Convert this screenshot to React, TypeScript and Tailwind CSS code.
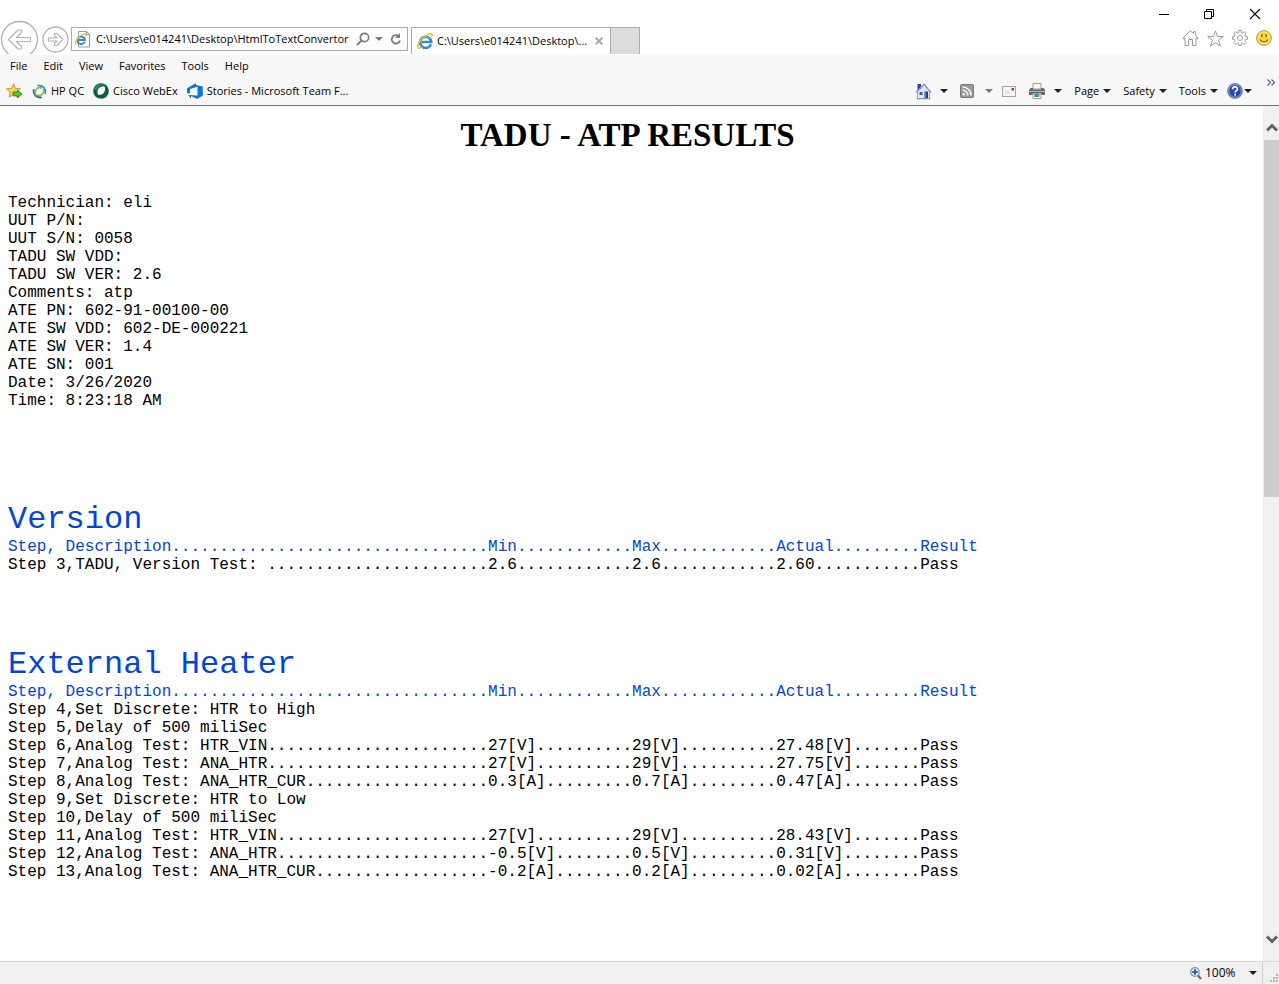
import type { ReactNode } from "react";

type Row = { step: string; min?: string; max?: string; actual?: string; result?: string };

const details = [
  "Technician: eli",
  "UUT P/N:",
  "UUT S/N: 0058",
  "TADU SW VDD:",
  "TADU SW VER: 2.6",
  "Comments: atp",
  "ATE PN: 602-91-00100-00",
  "ATE SW VDD: 602-DE-000221",
  "ATE SW VER: 1.4",
  "ATE SN: 001",
  "Date: 3/26/2020",
  "Time: 8:23:18 AM",
];

const headings: Row = { step: "Step, Description", min: "Min", max: "Max", actual: "Actual", result: "Result" };

const sections: { title: string; rows: Row[] }[] = [
  {
    title: "Version",
    rows: [{ step: "Step 3,TADU, Version Test: ", min: "2.6", max: "2.6", actual: "2.60", result: "Pass" }],
  },
  {
    title: "External Heater",
    rows: [
      { step: "Step 4,Set Discrete: HTR to High" },
      { step: "Step 5,Delay of 500 miliSec" },
      { step: "Step 6,Analog Test: HTR_VIN", min: "27[V]", max: "29[V]", actual: "27.48[V]", result: "Pass" },
      { step: "Step 7,Analog Test: ANA_HTR", min: "27[V]", max: "29[V]", actual: "27.75[V]", result: "Pass" },
      { step: "Step 8,Analog Test: ANA_HTR_CUR", min: "0.3[A]", max: "0.7[A]", actual: "0.47[A]", result: "Pass" },
      { step: "Step 9,Set Discrete: HTR to Low" },
      { step: "Step 10,Delay of 500 miliSec" },
      { step: "Step 11,Analog Test: HTR_VIN", min: "27[V]", max: "29[V]", actual: "28.43[V]", result: "Pass" },
      { step: "Step 12,Analog Test: ANA_HTR", min: "-0.5[V]", max: "0.5[V]", actual: "0.31[V]", result: "Pass" },
      { step: "Step 13,Analog Test: ANA_HTR_CUR", min: "-0.2[A]", max: "0.2[A]", actual: "0.02[A]", result: "Pass" },
    ],
  },
];

// Columns are dot-padded: description takes 50 characters, each value 15.
function formatRow(r: Row): string {
  if (!r.result) return r.step;
  return (
    r.step.padEnd(50, ".") +
    (r.min ?? "").padEnd(15, ".") +
    (r.max ?? "").padEnd(15, ".") +
    (r.actual ?? "").padEnd(15, ".") +
    r.result
  );
}

function Caret({ className = "text-[#1e1e1e]" }: { className?: string }) {
  return (
    <svg width="8" height="4" viewBox="0 0 8 4" className={`shrink-0 ${className}`} aria-hidden="true">
      <path d="M0 0h8L4 4z" fill="currentColor" />
    </svg>
  );
}

function IeLogo({ size }: { size: number }) {
  return (
    <svg width={size} height={size} viewBox="0 0 16 16" fill="none" aria-hidden="true" className="shrink-0">
      <path d="M14 11.300A5.600 5.600 0 1 1 14.300 9H4.800" stroke="#2b8fd0" strokeWidth="2.600" />
      <path d="M4 7.500A4.800 4.800 0 0 1 13 6.200" stroke="#6cc4ef" strokeWidth="1" />
      <path d="M1.200 15C-.6 12 4.500 4.600 10.500 1.600 14-.2 16 1 14.800 4" stroke="#f3b71b" strokeWidth="1.500" />
      <path d="M1.200 15c1 .6 2.500 0 4-1" stroke="#f3b71b" strokeWidth="1.300" />
    </svg>
  );
}

function PageIcon() {
  return (
    <svg width="16" height="17" viewBox="0 0 16 17" fill="none" aria-hidden="true" className="shrink-0">
      <path d="M3.500 .5h8l3 3v12.500h-11z" fill="#fff" stroke="#9b9b9b" />
      <path d="M11.500 .5v3h3" stroke="#9b9b9b" />
      <path d="M9.700 10.900A3.800 3.800 0 1 1 10 9H3.500" stroke="#2b8fd0" strokeWidth="2" />
      <path d="M1.200 13.300C-.6 11 3.500 5 7.500 3.500c2.800-1.200 4-.2 3.300 1.900" stroke="#f3b71b" strokeWidth="1.300" />
    </svg>
  );
}

function BackIcon() {
  return (
    <svg width="39" height="39" viewBox="0 0 39 39" fill="none" stroke="#b1b1b1" aria-hidden="true">
      <circle cx="19.500" cy="19.500" r="18" strokeWidth="1.300" />
      <path d="M8.500 19.500l9.500-9.500h3.500v2.500l-5 5H30.500v4H16.500l5 5V29H18z" strokeWidth="1.200" strokeLinejoin="round" />
    </svg>
  );
}

function ForwardIcon() {
  return (
    <svg width="27" height="27" viewBox="0 0 27 27" fill="none" stroke="#b1b1b1" aria-hidden="true">
      <circle cx="13.500" cy="13.500" r="12.500" strokeWidth="1.300" />
      <path d="M21 13.500l-6-6h-2.500v2l2.500 2.500H6.500v3H15l-2.500 2.500v2H15z" strokeWidth="1.100" strokeLinejoin="round" />
    </svg>
  );
}

function AddFavoriteIcon() {
  return (
    <svg width="17" height="16" viewBox="0 0 17 16" aria-hidden="true">
      <path d="M7.500 .8l2 4.700 5 .4-3.800 3.300 1.200 5-4.400-2.700-4.400 2.700 1.200-5L.5 5.900l5-.4z" fill="#fbd561" stroke="#d9921c" />
      <path d="M7 9h4.500V7l4.500 4-4.500 4v-2.200H7z" fill="#4fc544" stroke="#1f8d22" strokeWidth=".9" />
    </svg>
  );
}

function HpQcIcon() {
  return (
    <svg width="15" height="15" viewBox="0 0 15 15" fill="none" strokeLinecap="round" aria-hidden="true">
      <path d="M6.200 1.600C11 1 13.800 4.500 13.300 9.300" stroke="#3f88cd" strokeWidth="1.800" />
      <path d="M9 13.400C4.500 14 1.200 10.500 1.600 6" stroke="#2d5f9f" strokeWidth="1.800" />
      <path d="M9.300 3.900C5 2.800 2.500 6 3.600 10.300" stroke="#86c440" strokeWidth="1.700" />
      <path d="M5.600 11.200c4.200 1.200 6.900-2 5.900-6" stroke="#86c440" strokeWidth="1.700" />
    </svg>
  );
}

function WebexIcon() {
  return (
    <svg width="16" height="16" viewBox="0 0 16 16" aria-hidden="true">
      <circle cx="8" cy="8" r="7.800" fill="#075e3b" />
      <path d="M5 11.800C3 7 6 3 11.500 3.200c1.700 4.500-.8 9.300-6.500 8.600z" fill="#fff" />
      <path d="M1.500 5.500C3.500 1.500 8 .4 11.500 2.200 7 2 4 4 3.200 8z" fill="#3f9158" />
    </svg>
  );
}

function TeamIcon() {
  return (
    <svg width="16" height="16" viewBox="0 0 16 16" aria-hidden="true">
      <path d="M0 5.500L2.500 3.800 9 0v2l6.800 1.400v9.300L10 16 4 13v2.500L1 12l9.500.4V3.800L3 6v4.500l-3-.5z" fill="#0c78d6" />
    </svg>
  );
}

function HomeColorIcon() {
  return (
    <svg width="17" height="17" viewBox="0 0 17 17" aria-hidden="true">
      <path d="M2.500 8.500L9.500 2l5 6v7.500h-12z" fill="#dfe8f6" stroke="#8592b3" strokeWidth=".8" />
      <path d="M2.500 1h3.500v4.500L2.500 8z" fill="#2a3fb5" />
      <path d="M.8 9.500L9 1.300l7 8.200" fill="none" stroke="#8d98c8" strokeWidth="1.300" />
      <path d="M9.500 8.500h3.500v7H9.500z" fill="#1d377e" />
      <path d="M10 9h1.200v6H10z" fill="#3f8cc8" />
      <path d="M4.500 9h3v3h-3z" fill="#31589c" />
      <path d="M1.500 15.800h14" stroke="#8a9a80" />
    </svg>
  );
}

function RssIcon() {
  return (
    <svg width="14" height="14" viewBox="0 0 14 14" fill="none" aria-hidden="true">
      <rect x=".5" y=".5" width="13" height="13" rx="1.500" fill="#9a9a9a" stroke="#777" />
      <circle cx="3.800" cy="10.300" r="1.300" fill="#fff" />
      <path d="M2.700 6.200a5.200 5.200 0 0 1 5.200 5.200M2.700 3a8.400 8.400 0 0 1 8.400 8.400" stroke="#fff" strokeWidth="1.500" />
    </svg>
  );
}

function MailIcon() {
  return (
    <svg width="14" height="11" viewBox="0 0 14 11" fill="none" aria-hidden="true">
      <rect x=".5" y=".5" width="13" height="10" fill="#f5f5f5" stroke="#a3a3a3" />
      <path d="M9.500 2h2.500v2.500H9.500z" fill="#d8232a" />
      <path d="M3 5.500h4M3 7.500h5" stroke="#d8d8d8" />
    </svg>
  );
}

function PrinterIcon() {
  return (
    <svg width="16" height="16" viewBox="0 0 16 16" aria-hidden="true">
      <path d="M4 .5h8v5.500H4z" fill="#f7f7f7" stroke="#999" />
      <path d="M1.500 5H4v1.500h8V5h2.500L16 7v5H0V7z" fill="#6a6a6a" />
      <path d="M0 8.500h16" stroke="#b0b0b0" />
      <path d="M4 10.500h8v5H4z" fill="#fff" stroke="#999" />
      <path d="M5.500 11H8v3H5.500z" fill="#2a7fd0" />
      <path d="M8 11h2.500v3H8z" fill="#3fa79a" />
    </svg>
  );
}

function HelpIcon() {
  return (
    <svg width="16" height="16" viewBox="0 0 16 16" fill="none" aria-hidden="true">
      <circle cx="8" cy="8" r="7.300" fill="#2449ad" stroke="#7c8594" strokeWidth="1.300" />
      <circle cx="8" cy="8" r="6.200" stroke="#a9bbe8" strokeWidth=".7" />
      <path d="M5.600 6.200C5.600 3 10.500 3.200 10.500 5.900c0 1.800-2.300 1.800-2.300 3.700" stroke="#fff" strokeWidth="1.700" />
      <path d="M7.200 10.800H9v1.800H7.200z" fill="#fff" />
    </svg>
  );
}

function SmileyIcon() {
  return (
    <svg width="16" height="16" viewBox="0 0 16 16" fill="none" aria-hidden="true">
      <circle cx="8" cy="8" r="7.500" fill="#fdd94b" stroke="#a99b6c" strokeWidth=".9" />
      <path d="M5.900 4.200v3M10.100 4.200v3" stroke="#8a6a1c" strokeWidth="1.500" />
      <path d="M4 9.500c1.500 3 6.500 3 8 0" stroke="#8a6a1c" strokeWidth="1.200" />
    </svg>
  );
}

function GearIcon() {
  return (
    <svg width="16" height="16" viewBox="0 0 16 16" fill="none" stroke="#9b9b9b" strokeLinejoin="round" aria-hidden="true">
      <path d="M6.700 .5h2.600v2l1.500.6 1.500-1.400 2 2-1.400 1.500.6 1.500h2v2.600h-2l-.6 1.500 1.400 1.500-2 2-1.500-1.400-1.500.6v2H6.700v-2l-1.500-.6-1.500 1.400-2-2 1.400-1.500-.6-1.500h-2V6.700h2l.6-1.500L1.700 3.700l2-2 1.500 1.400 1.500-.6z" />
      <circle cx="8" cy="8" r="2.500" />
    </svg>
  );
}

function IconButton({ label, className = "", children }: { label: string; className?: string; children: ReactNode }) {
  return (
    <button type="button" aria-label={label} className={`flex shrink-0 items-center justify-center ${className}`}>
      {children}
    </button>
  );
}

function TitleArea() {
  return (
    <header className="flex h-[55px] shrink-0 items-start bg-white">
      <div className="flex h-[54px] shrink-0 items-start gap-[3px] overflow-hidden pt-5">
        <IconButton label="Back">
          <BackIcon />
        </IconButton>
        <IconButton label="Forward" className="mt-[6px]">
          <ForwardIcon />
        </IconButton>
      </div>
      <div className="mt-[27px] ml-[2px] flex h-6 w-[337px] shrink-0 items-center border border-[#ababab] pl-[3px]">
        <PageIcon />
        <input
          aria-label="Address"
          defaultValue="C:\Users\e014241\Desktop\HtmlToTextConvertor"
          className="ml-[5px] w-64 min-w-0 bg-transparent outline-none"
        />
        <IconButton label="Search" className="ml-1">
          <svg width="14" height="14" viewBox="0 0 14 14" fill="none" stroke="#7b7b7b" aria-hidden="true">
            <circle cx="8.500" cy="5.500" r="4.200" strokeWidth="1.700" />
            <path d="M5.500 8.500L1 13" strokeWidth="2" />
          </svg>
        </IconButton>
        <IconButton label="Address suggestions" className="ml-[5px]">
          <Caret className="text-[#7b7b7b]" />
        </IconButton>
        <IconButton label="Refresh" className="ml-[7px]">
          <svg width="12" height="13" viewBox="0 0 12 13" fill="none" stroke="#7b7b7b" aria-hidden="true">
            <path d="M8.800 3.200A4.200 4.200 0 1 0 10 7.500" strokeWidth="1.800" />
            <path d="M10 0v5H5z" fill="#7b7b7b" stroke="none" />
          </svg>
        </IconButton>
      </div>
      <div className="mt-[27px] ml-[3px] flex h-[27px] w-[200px] shrink-0 items-center border border-b-0 border-[#ababab] pl-[5px]">
        <IeLogo size={16} />
        <span className="ml-1 w-[154px] whitespace-nowrap">C:\Users\e014241\Desktop\...</span>
        <IconButton label="Close tab" className="ml-1">
          <svg width="8" height="8" viewBox="0 0 8 8" stroke="#a6a6a6" strokeWidth="2" aria-hidden="true">
            <path d="M.7 .7l6.600 6.600M7.300 .7L.7 7.300" />
          </svg>
        </IconButton>
      </div>
      <button
        type="button"
        aria-label="New tab"
        className="mt-[27px] h-[27px] w-[29px] shrink-0 border border-b-0 border-l-0 border-[#ababab] bg-[#dcdcdc]"
      />
      <div className="ml-auto flex shrink-0 flex-col">
        <div className="flex h-7 items-center justify-end gap-[34px] pr-[18px]">
          <IconButton label="Minimize">
            <svg width="11" height="11" viewBox="0 0 11 11" stroke="#000" aria-hidden="true">
              <path d="M0 5.500h10" />
            </svg>
          </IconButton>
          <IconButton label="Restore">
            <svg width="11" height="11" viewBox="0 0 11 11" fill="none" stroke="#000" aria-hidden="true">
              <path d="M.5 2.500h7v7h-7zM2.500 2.500v-2h7v7h-2" />
            </svg>
          </IconButton>
          <IconButton label="Close">
            <svg width="12" height="12" viewBox="0 0 12 12" stroke="#000" strokeWidth="1.100" aria-hidden="true">
              <path d="M1 1l10 10M11 1L1 11" />
            </svg>
          </IconButton>
        </div>
        <div className="flex h-5 items-center justify-end gap-2 pr-[7px]">
          <IconButton label="Home">
            <svg width="17" height="16" viewBox="0 0 17 16" fill="none" stroke="#9b9b9b" strokeLinejoin="round" aria-hidden="true">
              <path d="M.7 8.200L8.500 .7l3 2.800V1.500h2v4l2.800 2.700-.8.800-1.500-1.200v7.700h-3.500V9.500h-4v6H3V7.800L1.500 9z" />
            </svg>
          </IconButton>
          <IconButton label="Favorites">
            <svg width="17" height="17" viewBox="0 0 17 17" fill="none" stroke="#9b9b9b" strokeLinejoin="round" aria-hidden="true">
              <path d="M8.500 .8l2 5.600 5.800.2-4.600 3.600 1.600 5.800-4.800-3.300L3.700 16l1.600-5.800L.7 6.600l5.800-.2z" />
            </svg>
          </IconButton>
          <IconButton label="Settings">
            <GearIcon />
          </IconButton>
          <IconButton label="Send feedback">
            <SmileyIcon />
          </IconButton>
        </div>
      </div>
    </header>
  );
}

function FavoriteLink({ icon, label }: { icon: ReactNode; label: string }) {
  return (
    <a href="#" className="flex items-center gap-1 whitespace-nowrap">
      {icon}
      {label}
    </a>
  );
}

function Toolbars() {
  return (
    <div className="relative shrink-0 border-b border-[#6f6f6f] bg-[#f7f7f7]">
      <nav aria-label="Menu bar" className="flex h-[22px] items-center pl-[2px]">
        {["File", "Edit", "View", "Favorites", "Tools", "Help"].map((m) => (
          <button key={m} type="button" className="px-2">
            {m}
          </button>
        ))}
      </nav>
      <div className="flex h-7 items-center">
        <nav aria-label="Favorites bar" className="flex items-center gap-[9px] pl-[6px]">
          <IconButton label="Add to favorites bar">
            <AddFavoriteIcon />
          </IconButton>
          <FavoriteLink icon={<HpQcIcon />} label="HP QC" />
          <FavoriteLink icon={<WebexIcon />} label="Cisco WebEx" />
          <FavoriteLink icon={<TeamIcon />} label="Stories - Microsoft Team F..." />
        </nav>
        <div className="ml-auto flex items-center pr-[27px]">
          <IconButton label="Home page" className="gap-2">
            <HomeColorIcon />
            <Caret />
          </IconButton>
          <IconButton label="Feeds" className="ml-3 gap-[11px]">
            <RssIcon />
            <Caret className="text-[#777]" />
          </IconButton>
          <IconButton label="Read mail" className="ml-[9px]">
            <MailIcon />
          </IconButton>
          <IconButton label="Print" className="ml-[13px] gap-[9px]">
            <PrinterIcon />
            <Caret />
          </IconButton>
          {["Page", "Safety", "Tools"].map((m) => (
            <button key={m} type="button" className="ml-3 flex items-center gap-1">
              {m}
              <Caret />
            </button>
          ))}
          <IconButton label="Help" className="ml-[9px] gap-[1px]">
            <HelpIcon />
            <Caret />
          </IconButton>
        </div>
      </div>
      <button type="button" aria-label="More commands" className="absolute top-6 right-[3px]">
        <svg width="9" height="7" viewBox="0 0 9 7" fill="none" stroke="#5b5ba8" strokeWidth="1.200" aria-hidden="true">
          <path d="M.5 .5l3 3-3 3M4.500 .5l3 3-3 3" />
        </svg>
      </button>
    </div>
  );
}

function Report() {
  return (
    <main className="min-w-0 flex-1 overflow-hidden bg-white pt-[9px] pr-4 pl-2 font-['Liberation_Mono','Courier_New',monospace] text-base leading-[18px] text-black">
      <h1 className="text-center font-['Liberation_Serif','Times_New_Roman',serif] text-[33px] leading-10 font-bold">
        TADU - ATP RESULTS
      </h1>
      <pre className="mt-[39px] font-[inherit]">{details.join("\n")}</pre>
      <div className="mt-[92px] flex flex-col gap-[73px]">
        {sections.map((s) => (
          <section key={s.title}>
            <h2 className="text-[32px] leading-9 text-[#0046d5]">{s.title}</h2>
            <pre className="font-[inherit] text-[#0046d5]">{formatRow(headings)}</pre>
            <pre className="font-[inherit]">{s.rows.map(formatRow).join("\n")}</pre>
          </section>
        ))}
      </div>
    </main>
  );
}

function ScrollBar() {
  return (
    <div className="flex w-4 shrink-0 flex-col bg-[#f0f0f0] pl-px">
      <IconButton label="Scroll up" className="h-[34px] pt-[8px]">
        <svg width="12" height="9" viewBox="0 0 12 9" fill="none" stroke="#606060" strokeWidth="3" aria-hidden="true">
          <path d="M1 7.500l5-5 5 5" />
        </svg>
      </IconButton>
      <div className="flex-1">
        <div className="h-[46%] bg-[#cdcdcd]" />
      </div>
      <IconButton label="Scroll down" className="h-11">
        <svg width="12" height="9" viewBox="0 0 12 9" fill="none" stroke="#606060" strokeWidth="3" aria-hidden="true">
          <path d="M1 1.500l5 5 5-5" />
        </svg>
      </IconButton>
    </div>
  );
}

function StatusBar() {
  return (
    <footer className="flex h-[23px] shrink-0 items-center justify-end border-t border-[#d7d7d7] bg-[#f0f0f0]">
      <button type="button" className="flex items-center text-left">
        <svg width="12" height="13" viewBox="0 0 12 13" fill="none" aria-hidden="true">
          <path d="M8 8.500l3 3.500" stroke="#9a5a2c" strokeWidth="2.200" />
          <circle cx="5" cy="5" r="4.300" fill="#e5f2fd" stroke="#7b94b3" strokeWidth="1.200" />
          <path d="M5 2.200v5.600M2.200 5h5.600" stroke="#1b66c9" strokeWidth="2" />
        </svg>
        <span className="ml-[3px] w-11 text-[12px]">100%</span>
        <Caret />
      </button>
      <div className="ml-[5px] flex h-full w-[17px] items-end justify-end border-l border-[#d0d0d0] pb-px">
        <svg width="9" height="9" viewBox="0 0 9 9" fill="#b4b4b4" aria-hidden="true">
          <path d="M6 0h2v2H6zM3 3h2v2H3zM6 3h2v2H6zM0 6h2v2H0zM3 6h2v2H3zM6 6h2v2H6z" />
        </svg>
      </div>
    </footer>
  );
}

export default function App() {
  return (
    <div className="flex h-screen flex-col overflow-hidden bg-white font-['Open_Sans','Segoe_UI',sans-serif] text-[11px] leading-4 text-black">
      <TitleArea />
      <Toolbars />
      <div className="flex min-h-0 flex-1">
        <Report />
        <ScrollBar />
      </div>
      <StatusBar />
    </div>
  );
}
